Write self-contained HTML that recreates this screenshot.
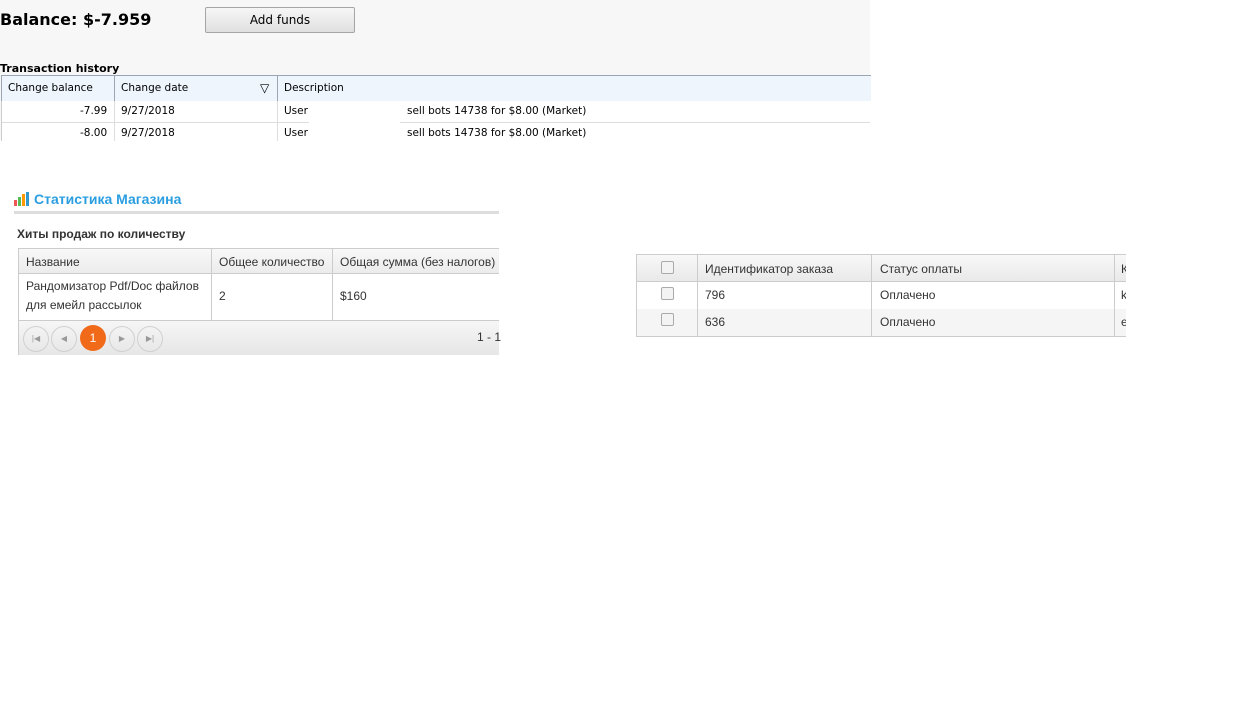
<!DOCTYPE html>
<html><head><meta charset="utf-8"><style>
body{margin:0;width:1240px;height:711px;background:#fff;position:relative;overflow:hidden;font-family:"Liberation Sans",Arial,sans-serif}
.a{position:absolute;white-space:nowrap}
.t{font-family:"DejaVu Sans","Liberation Sans",sans-serif;font-size:10.5px;color:#000}
</style></head><body>
<div class="a" style="left:0;top:0;width:870px;height:140px;background:#f7f7f7"></div>
<div class="a" style="left:0;top:10px;font-family:'DejaVu Sans',sans-serif;font-weight:bold;font-size:16px;color:#000">Balance: $-7.959</div>
<div class="a" style="left:205px;top:7px;width:148px;height:24px;border:1px solid #a5a5a5;border-radius:2px;background:linear-gradient(#f6f6f6,#e0e0e0);font-family:'DejaVu Sans',sans-serif;font-size:12px;text-align:center;line-height:25px">Add funds</div>
<div class="a" style="left:0;top:62px;font-family:'DejaVu Sans',sans-serif;font-weight:bold;font-size:11px">Transaction history</div>
<div class="a" style="left:1px;top:75px;width:869px;height:25px;background:#eef5fd;border-top:1px solid #9aa6b3;border-bottom:1px solid #9aa6b3;border-left:1px solid #9aa6b3"></div>
<div class="a" style="left:1px;top:101px;width:869px;height:40px;background:#fff;border-left:1px solid #ccc"></div>
<div class="a" style="left:114px;top:76px;width:1px;height:25px;background:#9aa6b3"></div>
<div class="a" style="left:277px;top:76px;width:1px;height:25px;background:#9aa6b3"></div>
<div class="a" style="left:114px;top:101px;width:1px;height:40px;background:#ddd"></div>
<div class="a" style="left:277px;top:101px;width:1px;height:40px;background:#ddd"></div>
<div class="a" style="left:2px;top:122px;width:307px;height:1px;background:#ddd"></div>
<div class="a" style="left:400px;top:122px;width:470px;height:1px;background:#ddd"></div>
<div class="a t" style="left:8px;top:82px">Change balance</div>
<div class="a t" style="left:121px;top:82px">Change date</div>
<div class="a t" style="left:260px;top:81px;font-size:12px">▽</div>
<div class="a t" style="left:284px;top:82px">Description</div>
<div class="a t" style="left:80px;top:105px">-7.99</div>
<div class="a t" style="left:121px;top:105px">9/27/2018</div>
<div class="a t" style="left:284px;top:105px">User</div>
<div class="a t" style="left:407px;top:105px">sell bots 14738 for $8.00 (Market)</div>
<div class="a t" style="left:80px;top:127px">-8.00</div>
<div class="a t" style="left:121px;top:127px">9/27/2018</div>
<div class="a t" style="left:284px;top:127px">User</div>
<div class="a t" style="left:407px;top:127px">sell bots 14738 for $8.00 (Market)</div>

<svg class="a" style="left:14px;top:192px" width="16" height="14"><rect x="0" y="8" width="3" height="6" fill="#e55"/><rect x="4" y="5" width="3" height="9" fill="#5b5"/><rect x="8" y="2" width="3" height="12" fill="#f90"/><rect x="12" y="0" width="3" height="14" fill="#39c"/></svg>
<div class="a" style="left:34px;top:191px;font-size:14px;font-weight:bold;color:#2a9ee0">Статистика Магазина</div>
<div class="a" style="left:14px;top:211px;width:485px;height:3px;background:#ddd"></div>
<div class="a" style="left:17px;top:227px;font-size:12px;font-weight:bold;color:#333">Хиты продаж по количеству</div>
<div class="a" style="left:18px;top:248px;width:481px;height:107px;border:1px solid #ccc;border-right:none;box-sizing:border-box"></div>
<div class="a" style="left:19px;top:249px;width:480px;height:24px;background:linear-gradient(#f8f8f8,#ececec);border-bottom:1px solid #ccc"></div>
<div class="a" style="left:211px;top:249px;width:1px;height:71px;background:#ccc"></div>
<div class="a" style="left:332px;top:249px;width:1px;height:71px;background:#ccc"></div>
<div class="a" style="left:19px;top:320px;width:480px;height:34px;background:linear-gradient(#f6f6f6,#e6e6e6);border-top:1px solid #ccc"></div>
<div class="a" style="left:26px;top:255px;font-size:12px;color:#333">Название</div>
<div class="a" style="left:219px;top:255px;font-size:12px;color:#333">Общее количество</div>
<div class="a" style="left:340px;top:255px;font-size:12px;color:#333">Общая сумма (без налогов)</div>
<div class="a" style="left:26px;top:277px;font-size:12px;color:#333;line-height:19px">Рандомизатор Pdf/Doc файлов<br>для емейл рассылок</div>
<div class="a" style="left:219px;top:289px;font-size:12px;color:#333">2</div>
<div class="a" style="left:340px;top:289px;font-size:12px;color:#333">$160</div>
<div class="a" style="left:23px;top:326px;width:24px;height:24px;border:1px solid #d0d0d0;border-radius:50%;font-size:8px;color:#999;text-align:center;line-height:24px">|◀</div>
<div class="a" style="left:51px;top:326px;width:24px;height:24px;border:1px solid #d0d0d0;border-radius:50%;font-size:8px;color:#999;text-align:center;line-height:24px">◀</div>
<div class="a" style="left:80px;top:325px;width:26px;height:26px;background:#f06a1a;border-radius:50%;font-size:12px;color:#fff;text-align:center;line-height:26px">1</div>
<div class="a" style="left:109px;top:326px;width:24px;height:24px;border:1px solid #d0d0d0;border-radius:50%;font-size:8px;color:#999;text-align:center;line-height:24px">▶</div>
<div class="a" style="left:137px;top:326px;width:24px;height:24px;border:1px solid #d0d0d0;border-radius:50%;font-size:8px;color:#999;text-align:center;line-height:24px">▶|</div>
<div class="a" style="left:477px;top:330px;font-size:12px;color:#333">1 - 1</div>

<div class="a" style="left:636px;top:254px;width:490px;height:83px;border-left:1px solid #ccc;border-top:1px solid #ccc;border-bottom:1px solid #ccc;box-sizing:border-box"></div>
<div class="a" style="left:637px;top:255px;width:489px;height:26px;background:linear-gradient(#f8f8f8,#e9e9e9);border-bottom:1px solid #ccc"></div>
<div class="a" style="left:637px;top:309px;width:489px;height:27px;background:#f5f5f5"></div>
<div class="a" style="left:697px;top:255px;width:1px;height:81px;background:#ccc"></div>
<div class="a" style="left:871px;top:255px;width:1px;height:81px;background:#ccc"></div>
<div class="a" style="left:1114px;top:255px;width:1px;height:81px;background:#ccc"></div>
<div class="a" style="left:661px;top:261px;width:11px;height:11px;border:1px solid #aaa;border-radius:2px;background:#f3f3f3"></div>
<div class="a" style="left:661px;top:287px;width:11px;height:11px;border:1px solid #aaa;border-radius:2px;background:#f3f3f3"></div>
<div class="a" style="left:661px;top:313px;width:11px;height:11px;border:1px solid #aaa;border-radius:2px;background:#f3f3f3"></div>
<div class="a" style="left:705px;top:262px;font-size:12px;color:#333">Идентификатор заказа</div>
<div class="a" style="left:880px;top:262px;font-size:12px;color:#333">Статус оплаты</div>
<div class="a" style="left:1121px;top:262px;font-size:12px;color:#333;width:5px;overflow:hidden">К</div>
<div class="a" style="left:705px;top:288px;font-size:12px;color:#333">796</div>
<div class="a" style="left:880px;top:288px;font-size:12px;color:#333">Оплачено</div>
<div class="a" style="left:1121px;top:288px;font-size:12px;color:#333;width:5px;overflow:hidden">k</div>
<div class="a" style="left:705px;top:315px;font-size:12px;color:#333">636</div>
<div class="a" style="left:880px;top:315px;font-size:12px;color:#333">Оплачено</div>
<div class="a" style="left:1121px;top:315px;font-size:12px;color:#333;width:5px;overflow:hidden">e</div>
</body></html>
